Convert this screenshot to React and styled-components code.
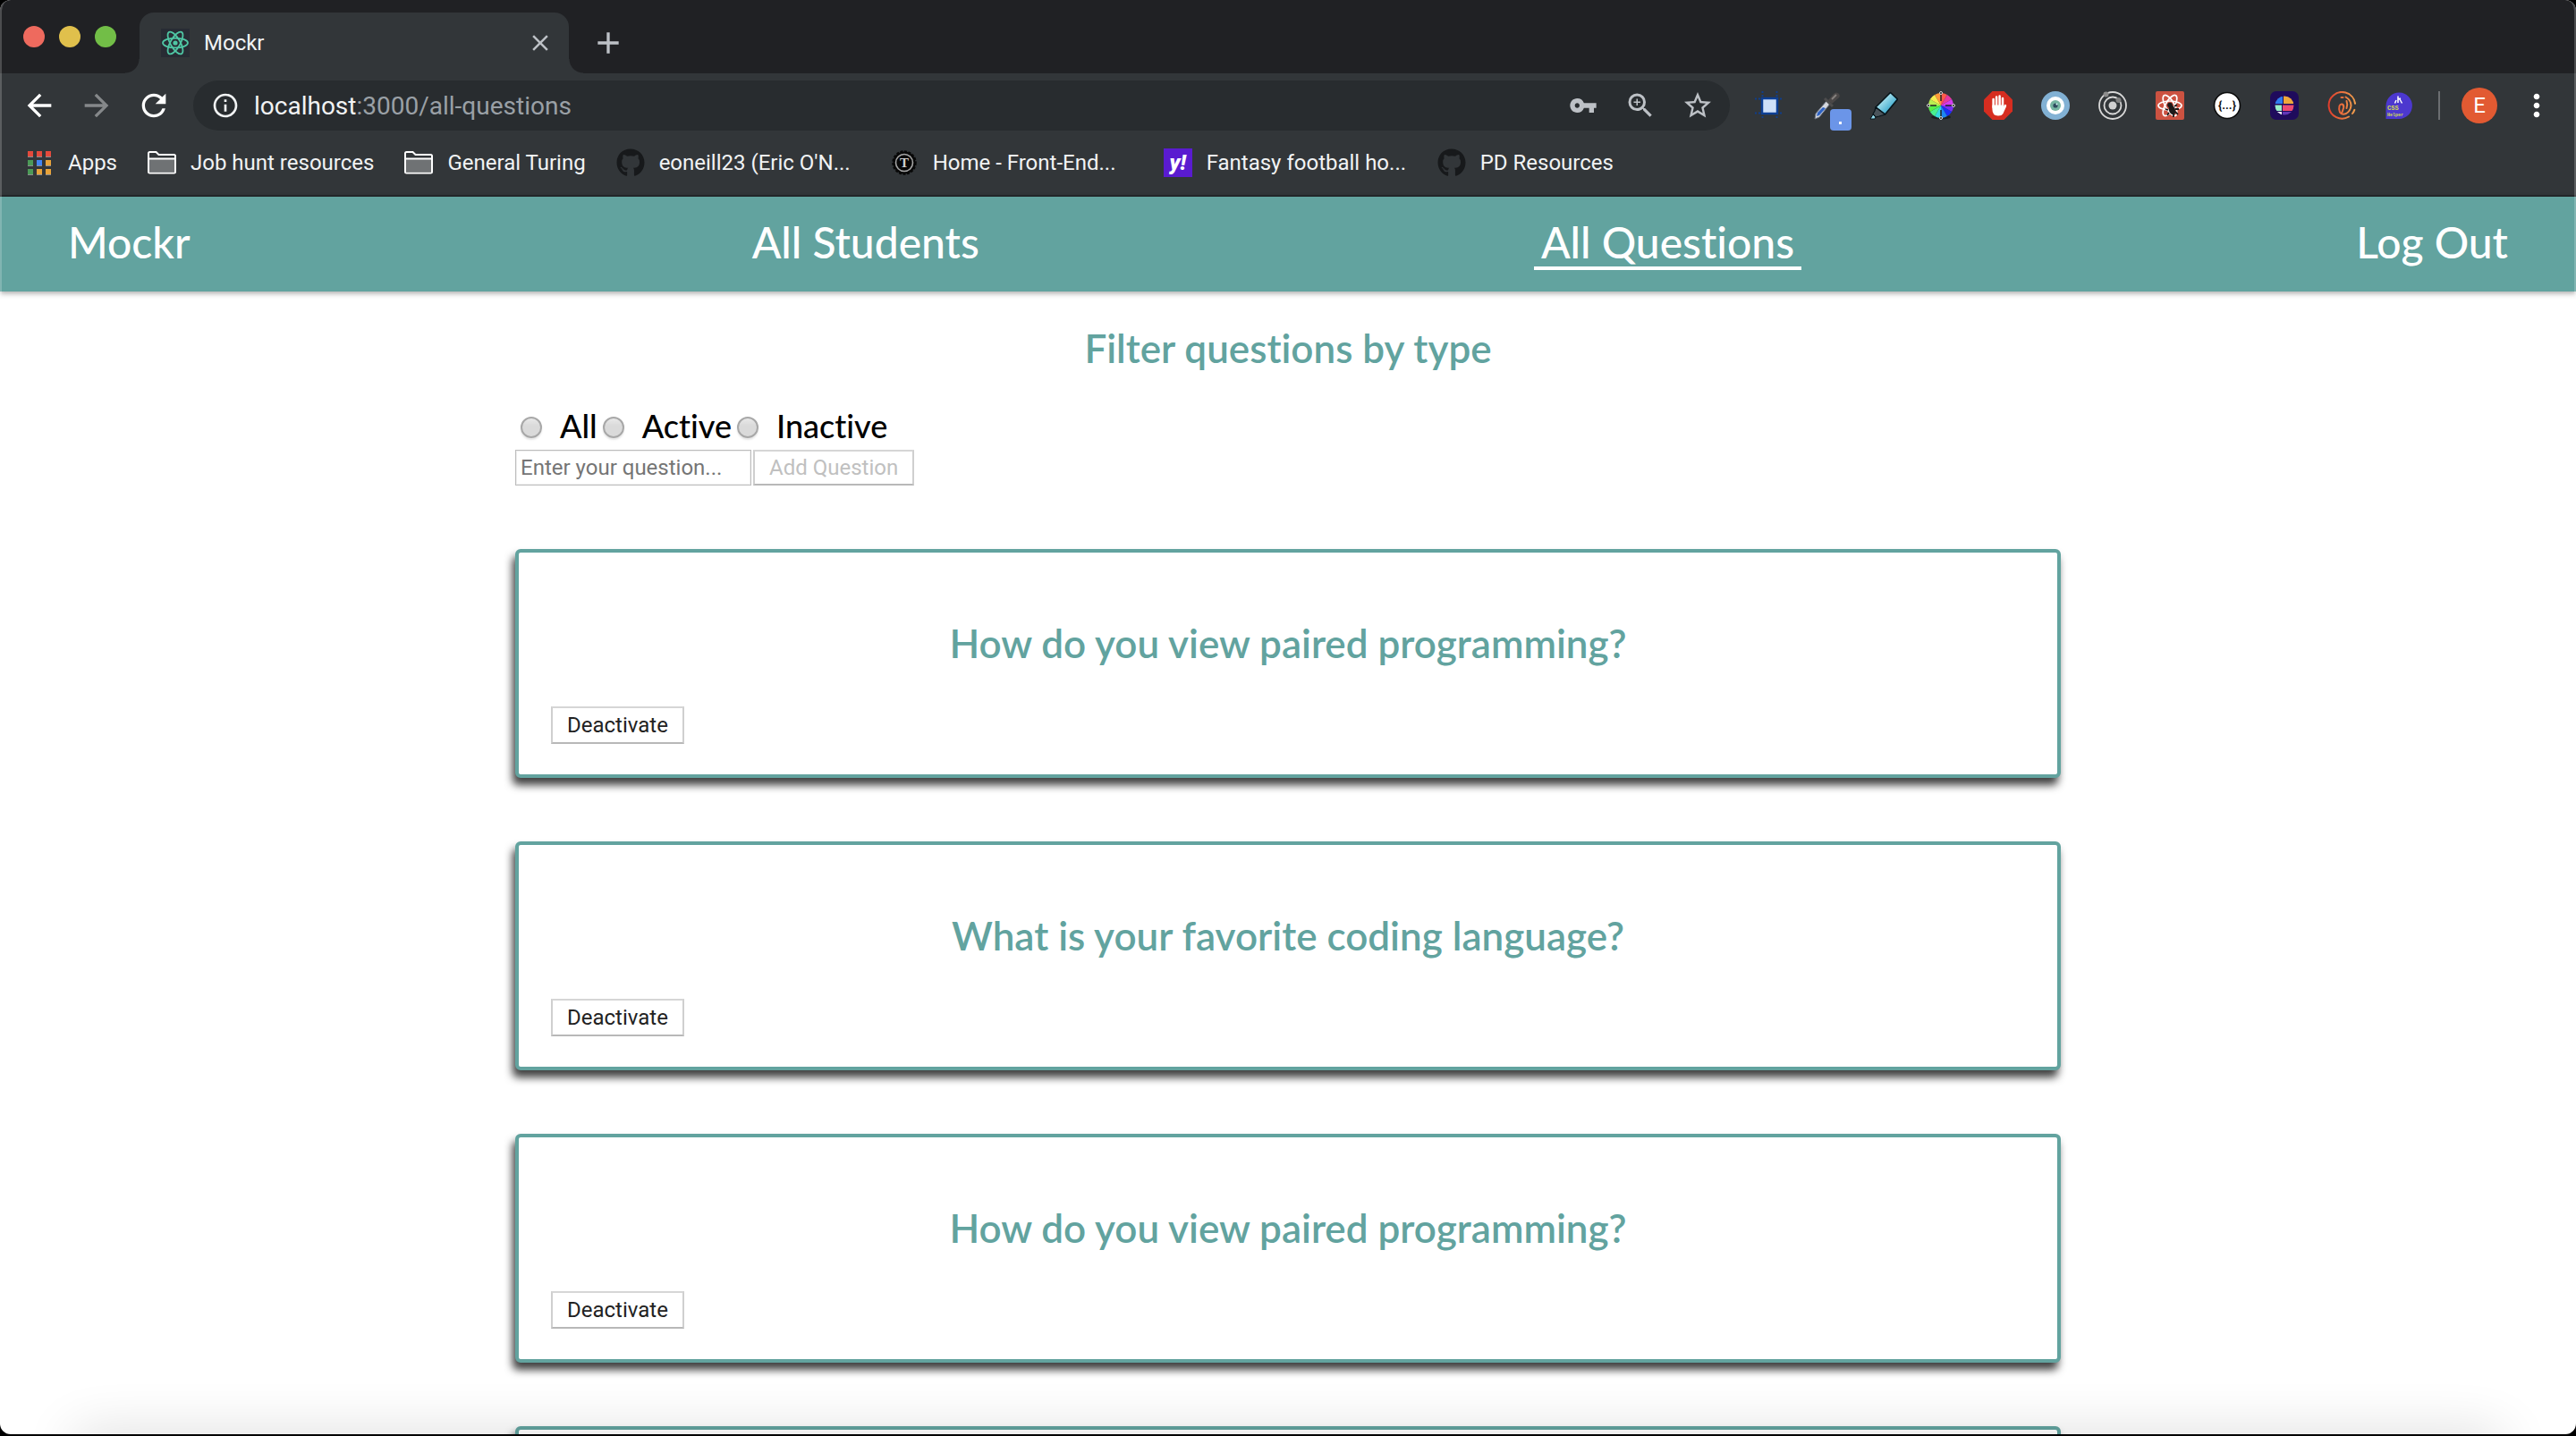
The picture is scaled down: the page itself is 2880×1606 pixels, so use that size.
import React, { useState } from "react";
import styled, { createGlobalStyle, css } from "styled-components";
import {
  MdAdd,
  MdArrowBack,
  MdArrowForward,
  MdClose,
  MdInfoOutline,
  MdMoreVert,
  MdRefresh,
  MdStarBorder,
  MdVpnKey,
  MdZoomIn,
} from "react-icons/md";
import { FaGithub } from "react-icons/fa";

const teal = "#62a39f";
const uiFont = 'Roboto, "Liberation Sans", sans-serif';
const pageFont = 'Lato, "Open Sans", sans-serif';

const GlobalStyle = createGlobalStyle`
  *, *::before, *::after { box-sizing: border-box; }
  body { margin: 0; background: #000; overflow: hidden; }
  button, input { font: inherit; margin: 0; }
`;

const Window = styled.div`
  position: relative;
  display: flex;
  flex-direction: column;
  height: calc(100vh - 2px);
  overflow: hidden;
  border-radius: 12px;
  background: #fff;
  font-family: ${uiFont};
  font-size: 24px;
  font-variant-ligatures: none;

  &::after {
    content: "";
    position: absolute;
    inset: 0;
    border: solid rgba(255, 255, 255, 0.2);
    border-width: 0 2px;
    border-radius: 12px;
    pointer-events: none;
  }
`;

/* ---------- tab strip ---------- */

const TabStrip = styled.div`
  display: flex;
  flex: none;
  height: 82px;
  background: #202124;
`;

const Lights = styled.div`
  display: flex;
  align-items: center;
  gap: 16px;
  width: 156px;
  padding-left: 26px;
`;

const Light = styled.button`
  width: 24px;
  height: 24px;
  padding: 0;
  border: 0;
  border-radius: 50%;
  background: ${(p) => p.$color};
`;

const Tab = styled.div`
  position: relative;
  display: flex;
  align-items: center;
  gap: 16px;
  width: 480px;
  margin-top: 14px;
  padding: 0 16px 0 24px;
  border-radius: 16px 16px 0 0;
  background: #323639;
  color: #f1f3f4;

  &::before,
  &::after {
    content: "";
    position: absolute;
    bottom: 0;
    width: 16px;
    height: 16px;
  }
  &::before {
    right: 100%;
    background: radial-gradient(circle at 0 0, transparent 15px, #323639 16px);
  }
  &::after {
    left: 100%;
    background: radial-gradient(circle at 100% 0, transparent 15px, #323639 16px);
  }
`;

const TabTitle = styled.span`
  flex: 1;
`;

const IconButton = styled.button`
  display: flex;
  flex: none;
  align-items: center;
  justify-content: center;
  width: ${(p) => p.$box || 40}px;
  height: ${(p) => p.$box || 40}px;
  padding: 0;
  border: 0;
  background: none;
  color: ${(p) => p.$color || "#fff"};
`;

const NewTab = styled(IconButton)`
  align-self: center;
  margin: 14px 0 0 24px;
`;

/* ---------- toolbar ---------- */

const Toolbar = styled.div`
  display: flex;
  flex: none;
  align-items: center;
  gap: 24px;
  height: 72px;
  padding: 0 24px;
  background: #323639;
`;

const AddressBar = styled.div`
  display: flex;
  flex: 1;
  align-items: center;
  gap: 28px;
  height: 56px;
  margin-right: 4px;
  padding: 0 18px 0 20px;
  border-radius: 28px;
  background: #282c2f;
`;

const Address = styled.div`
  display: flex;
  flex: 1;
  align-items: center;
  gap: 16px;
  color: #f1f3f4;
  font-size: 28px;
`;

const Path = styled.span`
  color: #9aa0a6;
`;

const Extensions = styled.div`
  display: flex;
  gap: 32px;
  margin-right: 4px;
`;

const Extension = styled(IconButton)`
  position: relative;
`;

const Badge = styled.span`
  position: absolute;
  left: 20px;
  top: 20px;
  display: flex;
  align-items: center;
  justify-content: center;
  width: 24px;
  height: 24px;
  border-radius: 4px;
  background: #6b95e8;

  &::after {
    content: "";
    width: 3px;
    height: 3px;
    margin-top: 6px;
    margin-right: 2px;
    background: #fff;
  }
`;

const Divider = styled.div`
  width: 2px;
  height: 32px;
  background: #6b6e71;
`;

const Avatar = styled.button`
  width: 40px;
  height: 40px;
  padding: 0;
  border: 0;
  border-radius: 50%;
  background: #e25a32;
  color: #fff;
  font-size: 24px;
`;

/* ---------- bookmarks ---------- */

const Bookmarks = styled.div`
  display: flex;
  flex: none;
  align-items: center;
  gap: 34px;
  height: 66px;
  padding: 0 28px 8px;
  border-bottom: 2px solid #25282b;
  background: #323639;
`;

const Bookmark = styled.a`
  display: flex;
  align-items: center;
  gap: 16px;
  color: #f1f3f4;
  text-decoration: none;
  white-space: nowrap;
`;

const BookmarkLabel = styled.span`
  min-width: ${(p) => (p.$cut ? "224px" : "0")};
`;

const YahooTile = styled.span`
  display: flex;
  align-items: center;
  justify-content: center;
  width: 32px;
  height: 32px;
  background: #5a1bd0;
  color: #fff;
  font-weight: 900;
  font-style: italic;
  font-size: 24px;
  line-height: 24px;
`;

/* ---------- Mockr page ---------- */

const Nav = styled.nav`
  position: relative;
  display: flex;
  flex: none;
  justify-content: space-between;
  align-items: flex-start;
  height: 106px;
  padding: 24px 68px 0;
  background: ${teal};
  box-shadow: 0 2px 6px rgba(0, 0, 0, 0.35);
  font-family: ${pageFont};
`;

const NavLink = styled.a`
  padding: 0 8px;
  border-bottom: 4px solid ${(p) => (p.$active ? "#fff" : "transparent")};
  color: #fff;
  font-size: 48px;
  font-weight: 500;
  line-height: 54px;
  text-decoration: none;
`;

const Main = styled.main`
  flex: 1;
  min-height: 0;
  width: 60%;
  margin: 0 auto;
  padding-top: 37px;
  font-family: ${pageFont};
`;

const Heading = styled.h2`
  margin: 0;
  color: ${teal};
  font-size: 44px;
  font-weight: 600;
  line-height: 52px;
  text-align: center;
`;

const Filters = styled.div`
  display: flex;
  margin-top: 39px;
`;

const FilterLabel = styled.label`
  display: flex;
  align-items: center;
  color: #000;
  font-size: 36px;
  font-weight: 500;
  line-height: 44px;
`;

const Radio = styled.input`
  appearance: none;
  width: 24px;
  height: 24px;
  margin: 4px 20px 0 6px;
  border: 2px solid #a8a8a8;
  border-radius: 50%;
  background: linear-gradient(#e9e9e9, #dadada 40%);
  box-shadow: 0 2px 2px rgba(0, 0, 0, 0.1);

  &:checked {
    background: radial-gradient(circle, #333 5px, #ddd 6px);
  }
`;

const control = css`
  font-family: ${uiFont};
  font-size: 24px;
  line-height: 28px;
`;

const AddForm = styled.form`
  display: flex;
  align-items: flex-end;
  gap: 2px;
  margin-top: 5px;
`;

const QuestionInput = styled.input`
  ${control}
  width: 264px;
  height: 40px;
  padding: 0 5px;
  border: 1px solid #bdbdbd;
  border-radius: 0;
  background: #fff;
  box-shadow: inset 0 0 0 1px #eee;

  &::placeholder {
    color: #757575;
    opacity: 1;
  }
`;

const PlainButton = styled.button`
  ${control}
  padding: ${(p) => (p.$compact ? 4 : 5)}px 16px;
  border: 2px solid;
  border-color: #d6d6d6 #cfcfcf #b8b8b8;
  background: #fff;
  color: #222;

  &:disabled {
    color: #c0c0c0;
  }
`;

const Card = styled.article`
  min-height: 256px;
  margin-top: 71px;
  padding: 75px 36px 34px;
  border: 4px solid ${teal};
  border-radius: 6px;
  background: #fff;
  box-shadow: -3px 8px 10px rgba(0, 0, 0, 0.75);
`;

const CardActions = styled.div`
  display: flex;
  margin-top: 45px;
`;

const DockGlow = styled.div`
  position: absolute;
  left: 84px;
  right: 84px;
  bottom: -40px;
  height: 40px;
  box-shadow: 0 0 60px rgba(0, 0, 0, 0.16);
  pointer-events: none;
`;

/* ---------- drawings ---------- */

const Art = ({ children, size = 32 }) => (
  <svg width={size} height={size} viewBox="0 0 32 32" aria-hidden="true">
    {children}
  </svg>
);

const Orbits = ({ color, cx = 16, cy = 16, rx = 14, ry = 5.4, w = 1.8 }) => (
  <g fill="none" stroke={color} strokeWidth={w}>
    {[0, 60, 120].map((a) => (
      <ellipse key={a} cx={cx} cy={cy} rx={rx} ry={ry} transform={`rotate(${a} ${cx} ${cy})`} />
    ))}
  </g>
);

const Favicon = () => (
  <Art>
    <rect width="32" height="32" fill="#282c34" />
    <Orbits color="#4fc6a4" />
    <circle cx="16" cy="16" r="2.6" fill="#4fc6a4" />
  </Art>
);

const AppsGrid = () => {
  const colors = ["#e34a3c", "#e34a3c", "#e34a3c", "#4c9a57", "#4285f4", "#e8a33a", "#4c9a57", "#e8a33a", "#e8a33a"];
  return (
    <Art>
      {colors.map((c, i) => (
        <g key={i}>
          <rect x={3 + (i % 3) * 10} y={3 + Math.floor(i / 3) * 10} width="6" height="7" fill="#8b8d8f" />
          <rect x={3 + (i % 3) * 10} y={3 + Math.floor(i / 3) * 10} width="6" height="6" fill={c} />
        </g>
      ))}
    </Art>
  );
};

const Folder = () => (
  <Art>
    <path d="M1 5.5Q1 4 2.500 4H9.500L12.500 7H29.500Q31 7 31 8.500V26Q31 27.500 29.500 27.500H2.500Q1 27.500 1 26Z" fill="#323639" stroke="#fff" strokeWidth="2" />
    <path d="M2 11.500H30V26.500H2Z" fill="#6f7274" />
    <path d="M1 11.500H31" stroke="#fff" strokeWidth="2" />
  </Art>
);

const TuringSeal = () => (
  <Art>
    <circle cx="16" cy="16" r="12.500" fill="#080808" stroke="#080808" strokeWidth="2.500" strokeDasharray="3 1.500" />
    <circle cx="16" cy="16" r="12" fill="#080808" />
    <circle cx="16" cy="16" r="9.500" fill="none" stroke="#a5a5a5" strokeWidth="1.600" />
    <text x="16" y="21" textAnchor="middle" fontFamily="Liberation Serif, serif" fontWeight="700" fontSize="15" fill="#d0d0d0">T</text>
  </Art>
);

const SelectionMark = () => (
  <Art>
    <path d="M8.500 0V32M24.500 0V32M0 8.500H32M0 24.500H32" stroke="#0d3f94" strokeWidth="2" strokeDasharray="2 2" opacity="0.9" />
    <rect x="8" y="8" width="17" height="17" fill="#cfe0f8" stroke="#0d3f94" strokeWidth="2.500" />
  </Art>
);

const Eyedropper = () => (
  <Art>
    <path d="M3 31L4 25L16 11L20 14L8 29Z" fill="#d5d8de" stroke="#6b7280" strokeWidth="1" />
    <path d="M5 28L6 24L12 18L15 19L8 27Z" fill="#2f63c4" />
    <path d="M14 8L23 17" stroke="#4d4d4d" strokeWidth="3" />
    <path d="M18 10L24 3Q27 0 30 3Q32 6 29 8L22 14Z" fill="#4a4747" />
    <path d="M22 9L27 4" stroke="#85807e" strokeWidth="2" />
  </Art>
);

const Marker = () => (
  <Art>
    <defs>
      <linearGradient id="marker" x1="0" y1="0" x2="1" y2="1">
        <stop offset="0.2" stopColor="#c5f0f6" />
        <stop offset="0.75" stopColor="#3aa8cc" />
      </linearGradient>
    </defs>
    <path d="M7 18L23.500 1.500L31.500 9L17.500 26Z" fill="url(#marker)" stroke="#07141a" strokeWidth="1.600" strokeLinejoin="round" />
    <path d="M7 18L17.500 26L11 28L7 29L4 25.500L6 22Z" fill="#4a545b" stroke="#07141a" strokeWidth="1.200" strokeLinejoin="round" />
    <path d="M4 26L7 29L6 31H1Z" fill="#8fd6e8" stroke="#07141a" strokeWidth="1" />
  </Art>
);

const ColorWheel = () => {
  const hues = ["#ff5a4a", "#e838a0", "#d43cf0", "#7a2cf5", "#1a30f5", "#1c86f0", "#35dbe0", "#48f090", "#58f048", "#b8f050", "#f5ee50", "#ff9a3a"];
  const point = (i) => {
    const a = ((i * 30 - 90) * Math.PI) / 180;
    return `${16 + 14 * Math.cos(a)} ${16 + 14 * Math.sin(a)}`;
  };
  return (
    <Art>
      <ellipse cx="16" cy="29" rx="11" ry="2.500" fill="#1b1d1f" />
      {hues.map((c, i) => (
        <path key={c} d={`M16 16L${point(i)}A14 14 0 0 1 ${point(i + 1)}Z`} fill={c} />
      ))}
      <path d="M16 3V11M16 21V29M3 16H11M21 16H29" stroke="#222" strokeWidth="1.500" />
      {[[16, 2], [16, 30], [2, 16], [30, 16]].map(([x, y]) => (
        <circle key={`${x}-${y}`} cx={x} cy={y} r="1.500" fill="#111" stroke="#ddd" strokeWidth="1" />
      ))}
    </Art>
  );
};

const StopHand = () => (
  <Art>
    <path d="M9.500 0H22.500L32 9.500V22.500L22.500 32H9.500L0 22.500V9.500Z" fill="#d62d20" />
    <g stroke="#fff" strokeWidth="2.500" strokeLinecap="round">
      <path d="M10.600 9V18M14.100 6.500V17M17.600 5.500V17M21 8V18" />
      <path d="M24 16L21.500 21" />
    </g>
    <path d="M9.400 15.500H22.200V19L24.800 15.500L25 17L21.500 25Q20 27.500 16 27.500Q9.400 27.500 9.400 20Z" fill="#fff" />
  </Art>
);

const Eye = () => (
  <Art>
    <circle cx="16" cy="16" r="16" fill="#82b1d4" />
    <circle cx="16" cy="16" r="10" fill="#fff" />
    <circle cx="16" cy="16" r="6" fill="#76b5a2" />
    <circle cx="16" cy="16" r="2.600" fill="#2e4a5e" />
    <circle cx="17.500" cy="14.500" r="1" fill="#dff" />
  </Art>
);

const Target = () => (
  <Art>
    <g fill="none" stroke="#d8d8d8" strokeWidth="1.800">
      <circle cx="16" cy="16" r="15" />
      <circle cx="16" cy="16" r="9.500" />
    </g>
    <circle cx="16" cy="16" r="4.500" fill="#d0d0d0" />
    <circle cx="8.500" cy="3.500" r="3" fill="#8c8c8c" />
    <circle cx="22.500" cy="10" r="3" fill="#808080" />
  </Art>
);

const ReactBug = () => (
  <Art>
    <rect width="32" height="32" rx="2" fill="#cc5241" />
    <Orbits color="#fff" rx={13} ry={5} w={1.700} />
    <ellipse cx="18.500" cy="21" rx="3.500" ry="5.500" fill="#1d1a1a" transform="rotate(-20 18.500 21)" />
    <circle cx="16" cy="15.500" r="2.800" fill="#1d1a1a" />
    <path d="M14 21L11 20M15 24L13 27M20 26L20 29M22 23L25 26M22 20L26 20M21 17L24 15" stroke="#1d1a1a" strokeWidth="1.800" />
  </Art>
);

const Braces = () => (
  <Art>
    <circle cx="16" cy="16" r="14.500" fill="#fff" stroke="#0c0c0c" strokeWidth="1.600" />
    <text x="16" y="20" textAnchor="middle" fontFamily="Roboto, sans-serif" fontWeight="700" fontSize="13" fill="#111">{"{...}"}</text>
  </Art>
);

const PaletteGlobe = () => (
  <Art>
    <defs>
      <clipPath id="globe"><circle cx="16" cy="16" r="10.500" /></clipPath>
    </defs>
    <rect width="32" height="32" rx="7" fill="#1f0b5c" />
    <g clipPath="url(#globe)">
      <rect x="5" y="5" width="9" height="9" fill="#2f7bf0" />
      <rect x="15" y="5" width="12" height="9" fill="#f0a83a" />
      <rect x="5" y="15.500" width="8" height="6.500" fill="#9af0c8" />
      <rect x="14" y="15.500" width="13" height="6.500" fill="#ee4a72" />
      <rect x="5" y="23" width="8" height="5" fill="#f0f0fa" />
      <rect x="14" y="23" width="13" height="5" fill="#6236b8" />
    </g>
  </Art>
);

const OrangeSwirl = () => (
  <Art>
    <defs>
      <linearGradient id="swirl" gradientUnits="userSpaceOnUse" x1="0" y1="0" x2="32" y2="0">
        <stop offset="0" stopColor="#e0392b" />
        <stop offset="1" stopColor="#f2a24e" />
      </linearGradient>
    </defs>
    <g fill="none" stroke="url(#swirl)" strokeWidth="2" strokeLinecap="round">
      <path d="M24 28.500A14.800 14.800 0 1 1 28 25" strokeDasharray="75 7 40" />
      <path d="M20.500 6.500Q26.500 10 26.500 16Q26 22 21 25Q16 27 14 23.500Q12.500 20 13.500 16.500Q14.500 14 16.500 14.500Q19 15.500 18 19L16 25" />
      <path d="M15.500 7H17.500M21.500 11Q23 15 21.500 19" />
    </g>
  </Art>
);

const CssHelper = () => (
  <Art>
    <path d="M1.500 31V16A14.700 14.700 0 1 1 16 31Z" fill="#4c38cf" />
    <path d="M15 5.500V13M13 10L11.500 13.500M17 9L19.500 13.500M15 9L18 8" stroke="#fff" strokeWidth="1.500" fill="none" />
    <text x="3" y="21" fontFamily="Liberation Mono, monospace" fontWeight="700" fontSize="7" fill="#d3dc50">CSS</text>
    <text x="3" y="27.500" fontFamily="Liberation Mono, monospace" fontWeight="700" fontSize="5" fill="#d3dc50">Helper</text>
  </Art>
);

/* ---------- data ---------- */

const extensions = [
  ["Selection", SelectionMark],
  ["Eyedropper", Eyedropper, true],
  ["Highlighter", Marker],
  ["Color wheel", ColorWheel],
  ["Ad blocker", StopHand],
  ["Eye", Eye],
  ["Orbit", Target],
  ["React tools", ReactBug],
  ["JSON", Braces],
  ["Palette", PaletteGlobe],
  ["Swirl", OrangeSwirl],
  ["CSS Helper", CssHelper],
];

const github = <FaGithub size={32} color="#17191b" />;

const bookmarks = [
  { label: "Apps", icon: <AppsGrid /> },
  { label: "Job hunt resources", icon: <Folder /> },
  { label: "General Turing", icon: <Folder /> },
  { label: "eoneill23 (Eric O'N...", icon: github, cut: true },
  { label: "Home - Front-End...", icon: <TuringSeal />, cut: true },
  { label: "Fantasy football ho...", icon: <YahooTile aria-hidden="true">y!</YahooTile>, cut: true },
  { label: "PD Resources", icon: github },
];

const links = ["Mockr", "All Students", "All Questions", "Log Out"];

const questions = [
  "How do you view paired programming?",
  "What is your favorite coding language?",
  "How do you view paired programming?",
  null,
];

export default function App() {
  const [filter, setFilter] = useState("");
  const [draft, setDraft] = useState("");

  return (
    <>
      <GlobalStyle />
      <Window>
        <TabStrip>
          <Lights>
            <Light $color="#ee6a5e" aria-label="Close window" />
            <Light $color="#e0c04c" aria-label="Minimize window" />
            <Light $color="#72be47" aria-label="Zoom window" />
          </Lights>
          <Tab>
            <Favicon />
            <TabTitle>Mockr</TabTitle>
            <IconButton $box={32} $color="#bdc1c6" aria-label="Close tab">
              <MdClose size={30} />
            </IconButton>
          </Tab>
          <NewTab $color="#bdc1c6" aria-label="New tab">
            <MdAdd size={40} />
          </NewTab>
        </TabStrip>

        <Toolbar>
          <IconButton aria-label="Back"><MdArrowBack size={40} /></IconButton>
          <IconButton $color="#85888a" aria-label="Forward"><MdArrowForward size={40} /></IconButton>
          <IconButton aria-label="Reload"><MdRefresh size={42} /></IconButton>
          <AddressBar>
            <Address>
              <MdInfoOutline size={32} />
              <span>localhost<Path>:3000/all-questions</Path></span>
            </Address>
            <IconButton $box={36} $color="#bdc1c6" aria-label="Passwords"><MdVpnKey size={32} /></IconButton>
            <IconButton $box={36} $color="#bdc1c6" aria-label="Zoom"><MdZoomIn size={38} /></IconButton>
            <IconButton $box={36} $color="#bdc1c6" aria-label="Bookmark"><MdStarBorder size={36} /></IconButton>
          </AddressBar>
          <Extensions>
            {extensions.map(([name, Drawing, badge]) => (
              <Extension key={name} $box={32} aria-label={name}>
                <Drawing />
                {badge && <Badge />}
              </Extension>
            ))}
          </Extensions>
          <Divider />
          <Avatar>E</Avatar>
          <IconButton aria-label="Menu"><MdMoreVert size={40} /></IconButton>
        </Toolbar>

        <Bookmarks>
          {bookmarks.map(({ label, icon, cut }) => (
            <Bookmark key={label} href="#">
              {icon}
              <BookmarkLabel $cut={cut}>{label}</BookmarkLabel>
            </Bookmark>
          ))}
        </Bookmarks>

        <Nav>
          {links.map((name) => (
            <NavLink key={name} href="#" $active={name === "All Questions"}>{name}</NavLink>
          ))}
        </Nav>

        <Main>
          <Heading>Filter questions by type</Heading>
          <Filters>
            {["All", "Active", "Inactive"].map((name) => (
              <FilterLabel key={name}>
                <Radio type="radio" name="filter" checked={filter === name} onChange={() => setFilter(name)} />
                {name}
              </FilterLabel>
            ))}
          </Filters>
          <AddForm onSubmit={(e) => e.preventDefault()}>
            <QuestionInput
              aria-label="Question"
              placeholder="Enter your question..."
              value={draft}
              onChange={(e) => setDraft(e.target.value)}
            />
            <PlainButton $compact disabled={!draft}>Add Question</PlainButton>
          </AddForm>
          {questions.map((question, i) => (
            <Card key={i}>
              {question && (
                <>
                  <Heading>{question}</Heading>
                  <CardActions>
                    <PlainButton type="button">Deactivate</PlainButton>
                  </CardActions>
                </>
              )}
            </Card>
          ))}
        </Main>
        <DockGlow />
      </Window>
    </>
  );
}
